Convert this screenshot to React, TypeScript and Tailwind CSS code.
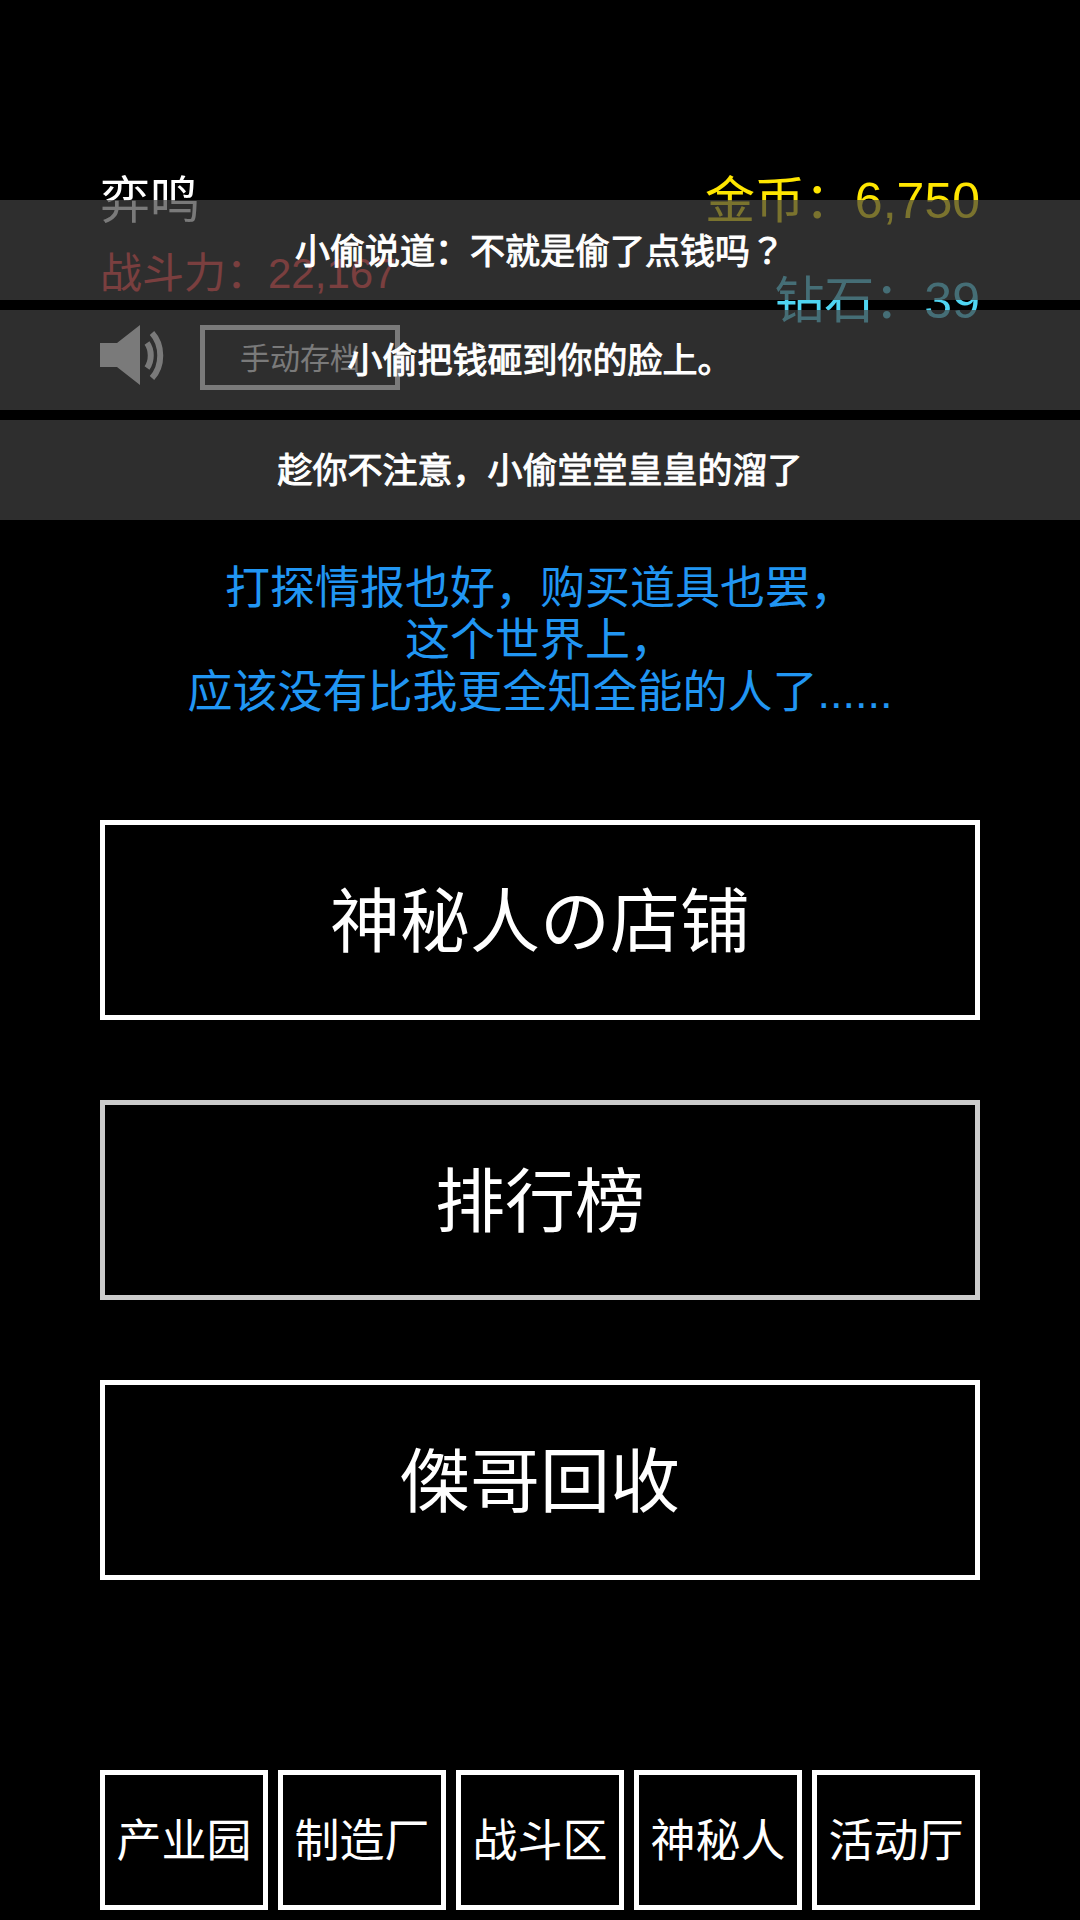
import type { ReactNode } from 'react'

const navItems = ['产业园', '制造厂', '战斗区', '神秘人', '活动厅']

const toasts: { id: number; text: ReactNode }[] = [
  {
    id: 1,
    text: (
      <>
        小偷说道：不就是偷了点钱吗<span className="font-['Noto_Sans_CJK_TC',sans-serif]">？</span>
      </>
    ),
  },
  { id: 2, text: '小偷把钱砸到你的脸上。' },
  { id: 3, text: '趁你不注意，小偷堂堂皇皇的溜了' },
]

function SpeakerIcon() {
  return (
    <svg width="66" height="60" viewBox="0 0 66 60" fill="none" className="shrink-0">
      <path d="M0 18H17L40 0V60L17 42H0Z" fill="#fff" />
      <path d="M47 18C52 25 52 36 47 43" stroke="#fff" strokeWidth="6" />
      <path d="M52 8C63 20 63 41 52 53" stroke="#fff" strokeWidth="6" />
    </svg>
  )
}

function MenuButton({ label, pressed }: { label: string; pressed?: boolean }) {
  return (
    <button
      className={`h-[200px] w-full border-[5px] bg-black pt-[5px] text-[70px] leading-none text-white ${
        pressed ? 'border-[#cccccc]' : 'border-white'
      }`}
    >
      {label}
    </button>
  )
}

export default function App() {
  return (
    <div className="relative h-[1920px] w-[1080px] overflow-hidden bg-black px-[100px] font-['Liberation_Sans','Noto_Sans_CJK_SC',sans-serif] text-white">
      <div className="flex justify-between pt-[167px]">
        <div>
          <div className="text-[50px] leading-[68px]">弈鸣</div>
          <div className="mt-[4px] text-[42px] leading-[70px] text-[#ff3b3b]">战斗力：22,167</div>
          <div className="mt-[16px] flex items-start gap-[34px]">
            <SpeakerIcon />
            <div className="flex h-[65px] w-[200px] items-center justify-center border-[5px] border-white pt-[2px] text-[30px]">
              手动存档
            </div>
          </div>
        </div>
        <div className="text-right text-[50px] leading-[68px]">
          <div className="text-[#ffe600]">金币：6,750</div>
          <div className="mt-[32px] text-[#4fd5f2]">钻石：39</div>
        </div>
      </div>

      <p className="mt-[173px] text-center text-[45px] leading-[52px] text-[#2196f3]">
        打探情报也好，购买道具也罢，
        <br />
        这个世界上，
        <br />
        应该没有比我更全知全能的人了......
      </p>

      <div className="mt-[101px] flex flex-col gap-[80px]">
        <MenuButton label="神秘人の店铺" />
        <MenuButton label="排行榜" pressed />
        <MenuButton label="傑哥回收" />
      </div>

      <div className="mt-[190px] grid grid-cols-5 gap-[10px]">
        {navItems.map((item) => (
          <button key={item} className="h-[140px] border-[5px] border-white pt-[2px] text-[45px] leading-none whitespace-nowrap">
            {item}
          </button>
        ))}
      </div>

      {/* toast stack sits over the header */}
      <div className="absolute top-[200px] left-0 flex w-full flex-col gap-[10px]">
        {toasts.map((toast) => (
          <div
            key={toast.id}
            className="flex h-[100px] items-center justify-center bg-[#424242]/70 pt-[2px] text-[35px] [-webkit-text-stroke:1px_#fff]"
          >
            <span>{toast.text}</span>
          </div>
        ))}
      </div>
    </div>
  )
}
